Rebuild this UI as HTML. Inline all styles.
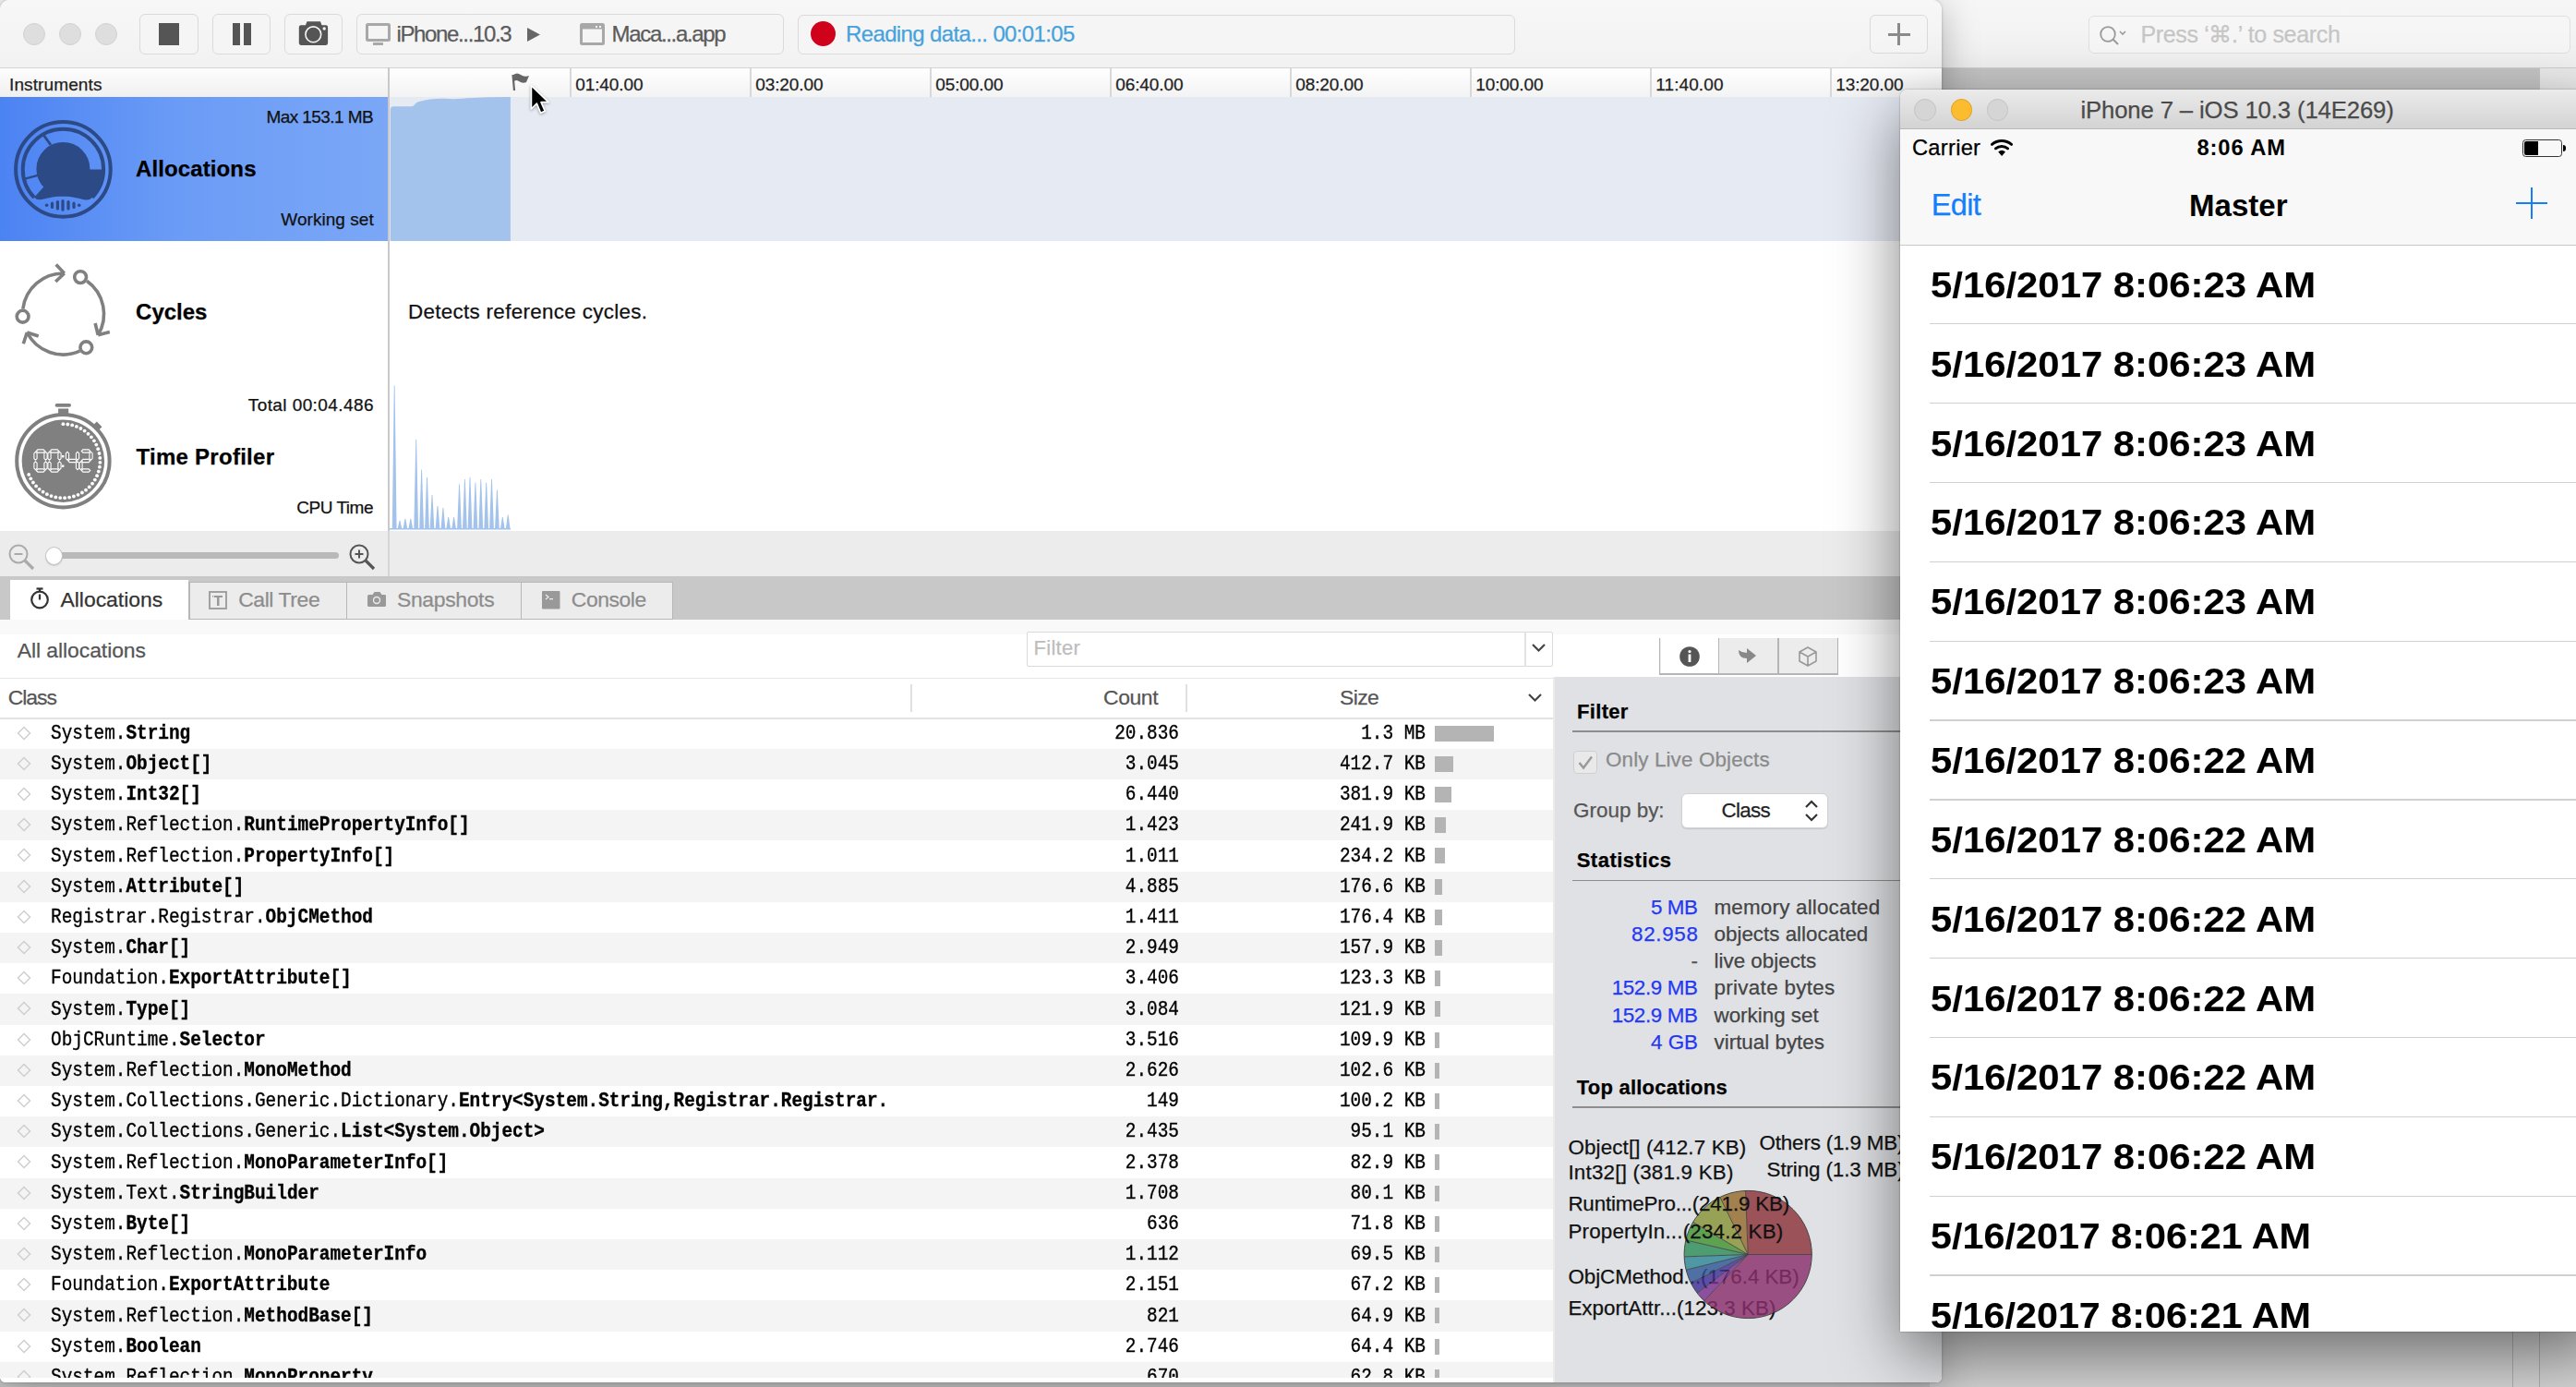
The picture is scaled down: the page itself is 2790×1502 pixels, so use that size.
<!DOCTYPE html><html><head><meta charset="utf-8"><style>
html,body{margin:0;padding:0;}
body{width:2790px;height:1502px;position:relative;overflow:hidden;background:#c6c6c6;font-family:"Liberation Sans",sans-serif;}
.t{position:absolute;white-space:pre;-webkit-text-stroke-width:0.25px;}
.r{position:absolute;box-sizing:border-box;}
svg{position:absolute;overflow:visible;}
</style></head><body>

<div class="r" style="left:2090px;top:0px;width:700px;height:74px;background:linear-gradient(#f6f6f6,#f1f1f1);border-bottom:1px solid #d0d0d0;"></div>
<div class="r" style="left:2262px;top:16.5px;width:522px;height:41.5px;background:#f6f6f6;border:1.5px solid #e0e0e0;border-radius:6px;"></div>
<div class="t" style="top:24.83px;font-size:25px;line-height:25px;color:#c6c6c6;font-weight:normal;font-family:'Liberation Sans', sans-serif;letter-spacing:-0.335px;left:2318.40px;">Press ‘⌘.’ to search</div>
<svg style="left:2272px;top:25px" width="36" height="28" viewBox="0 0 36 28"><circle cx="11" cy="12" r="7.8" fill="none" stroke="#9a9a9a" stroke-width="1.8"/><line x1="16.5" y1="17.5" x2="22" y2="23" stroke="#9a9a9a" stroke-width="2"/><path d="M24 9 L27 12 L30 9" fill="none" stroke="#9a9a9a" stroke-width="1.6"/></svg>
<div class="r" style="left:2090px;top:74px;width:661px;height:25px;background:#c6c6c6;"></div>
<div class="r" style="left:2751px;top:74px;width:39px;height:25px;background:#ececec;"></div>
<div class="r" style="left:2090px;top:99px;width:700px;height:1403px;background:#d6d6d6;"></div>
<div class="r" style="left:2721px;top:1441px;width:1px;height:61px;background:#b0b0b0;"></div>
<div class="r" style="left:2750px;top:1441px;width:1px;height:61px;background:#b0b0b0;"></div>
<div class="r" style="left:0px;top:0px;width:24px;height:24px;background:#f2f2f2;"></div>
<div class="r" style="left:0;top:0;width:2103px;height:1497px;border-radius:10px 10px 6px 6px;overflow:hidden;background:#fff;box-shadow:0 0 3px rgba(0,0,0,0.25),0 8px 40px rgba(0,0,0,0.28);">
<div class="r" style="left:0px;top:0px;width:2103px;height:74px;background:linear-gradient(#f7f7f7,#f2f2f2);border-bottom:1.5px solid #d3d3d3;"></div>
<div class="r" style="left:25px;top:24.6px;width:24px;height:24.0px;background:#dedede;border:1px solid #d2d2d2;border-radius:50%;"></div>
<div class="r" style="left:64px;top:24.6px;width:24px;height:24.0px;background:#dedede;border:1px solid #d2d2d2;border-radius:50%;"></div>
<div class="r" style="left:103px;top:24.6px;width:24px;height:24.0px;background:#dedede;border:1px solid #d2d2d2;border-radius:50%;"></div>
<div class="r" style="left:151px;top:15px;width:64px;height:44px;background:#f5f5f5;border:1.5px solid #dadada;border-radius:6px;"></div>
<div class="r" style="left:230px;top:15px;width:63px;height:44px;background:#f5f5f5;border:1.5px solid #dadada;border-radius:6px;"></div>
<div class="r" style="left:308px;top:15px;width:63px;height:44px;background:#f5f5f5;border:1.5px solid #dadada;border-radius:6px;"></div>
<div class="r" style="left:172px;top:25px;width:22px;height:24px;background:#555;"></div>
<div class="r" style="left:252px;top:25px;width:8px;height:24px;background:#555;"></div>
<div class="r" style="left:264px;top:25px;width:8px;height:24px;background:#555;"></div>
<svg style="left:0;top:0" width="400" height="74"><path d="M326 27.2 L331 27.2 L332.5 23.3 L347 23.3 L348.5 27.2 L353 27.2 Q355.1 27.2 355.1 29.5 L355.1 46.8 Q355.1 48.9 353 48.9 L326 48.9 Q323.8 48.9 323.8 46.8 L323.8 29.5 Q323.8 27.2 326 27.2 Z" fill="#555"/><circle cx="339.3" cy="37.3" r="8.4" fill="none" stroke="#f5f5f5" stroke-width="1.6"/><circle cx="351.2" cy="31" r="1.7" fill="#f5f5f5"/></svg>
<div class="r" style="left:386px;top:15px;width:463px;height:44px;background:#f5f5f5;border:1.5px solid #dadada;border-radius:6px;"></div>
<svg style="left:396px;top:25px" width="28" height="26" viewBox="0 0 28 26"><rect x="1.5" y="1.5" width="24" height="17" fill="none" stroke="#a8a8a8" stroke-width="3" rx="1"/><rect x="8" y="21" width="11" height="3" fill="#a8a8a8"/></svg>
<div class="t" style="top:24.98px;font-size:24px;line-height:24px;color:#5b5b5b;font-weight:normal;font-family:'Liberation Sans', sans-serif;letter-spacing:-1.363px;left:429.50px;">iPhone...10.3</div>
<svg style="left:570px;top:30px" width="16" height="16" viewBox="0 0 16 16"><path d="M1 0 L15 7.5 L1 15z" fill="#666"/></svg>
<svg style="left:628px;top:25px" width="28" height="24" viewBox="0 0 28 24"><rect x="1.5" y="1.5" width="24" height="21" fill="none" stroke="#a8a8a8" stroke-width="3" rx="1"/><rect x="1.5" y="1.5" width="24" height="5" fill="#a8a8a8"/><rect x="17" y="3" width="2" height="2" fill="#f5f5f5"/><rect x="21" y="3" width="2" height="2" fill="#f5f5f5"/></svg>
<div class="t" style="top:24.98px;font-size:24px;line-height:24px;color:#5b5b5b;font-weight:normal;font-family:'Liberation Sans', sans-serif;letter-spacing:-1.333px;left:662.60px;">Maca...a.app</div>
<div class="r" style="left:864px;top:15.7px;width:777px;height:43.0px;background:#f5f5f5;border:1.5px solid #dadada;border-radius:6px;"></div>
<div class="r" style="left:878px;top:23px;width:27px;height:27px;background:#d0021b;border-radius:50%;"></div>
<div class="t" style="top:24.88px;font-size:24px;line-height:24px;color:#45a2dd;font-weight:normal;font-family:'Liberation Sans', sans-serif;letter-spacing:-0.629px;left:916.00px;">Reading data... 00:01:05</div>
<div class="r" style="left:2025px;top:15.7px;width:63px;height:42.7px;background:#f5f5f5;border:1.5px solid #dadada;border-radius:6px;"></div>
<div class="r" style="left:2044.5px;top:36px;width:24.0px;height:2.5px;background:#8a8a8a;"></div>
<div class="r" style="left:2055.3px;top:25.2px;width:2.5px;height:24.000000000000004px;background:#8a8a8a;"></div>
<div class="r" style="left:0px;top:74px;width:420px;height:31px;background:linear-gradient(#fdfdfd,#f0f0f0);"></div>
<div class="t" style="top:82.41px;font-size:19px;line-height:19px;color:#222;font-weight:normal;font-family:'Liberation Sans', sans-serif;letter-spacing:0.113px;left:10.00px;">Instruments</div>
<div class="r" style="left:421px;top:74px;width:1682px;height:31px;background:linear-gradient(#ffffff,#f3f3f3);"></div>
<div class="r" style="left:617px;top:74px;width:1.5px;height:31px;background:#d8d8d8;"></div>
<div class="t" style="top:81.71px;font-size:19px;line-height:19px;color:#222;font-weight:normal;font-family:'Liberation Sans', sans-serif;letter-spacing:-0.096px;left:623.20px;">01:40.00</div>
<div class="r" style="left:812px;top:74px;width:1.5px;height:31px;background:#d8d8d8;"></div>
<div class="t" style="top:81.71px;font-size:19px;line-height:19px;color:#222;font-weight:normal;font-family:'Liberation Sans', sans-serif;letter-spacing:-0.096px;left:818.20px;">03:20.00</div>
<div class="r" style="left:1007px;top:74px;width:1.5px;height:31px;background:#d8d8d8;"></div>
<div class="t" style="top:81.71px;font-size:19px;line-height:19px;color:#222;font-weight:normal;font-family:'Liberation Sans', sans-serif;letter-spacing:-0.096px;left:1013.20px;">05:00.00</div>
<div class="r" style="left:1202px;top:74px;width:1.5px;height:31px;background:#d8d8d8;"></div>
<div class="t" style="top:81.71px;font-size:19px;line-height:19px;color:#222;font-weight:normal;font-family:'Liberation Sans', sans-serif;letter-spacing:-0.096px;left:1208.20px;">06:40.00</div>
<div class="r" style="left:1397px;top:74px;width:1.5px;height:31px;background:#d8d8d8;"></div>
<div class="t" style="top:81.71px;font-size:19px;line-height:19px;color:#222;font-weight:normal;font-family:'Liberation Sans', sans-serif;letter-spacing:-0.096px;left:1403.20px;">08:20.00</div>
<div class="r" style="left:1592px;top:74px;width:1.5px;height:31px;background:#d8d8d8;"></div>
<div class="t" style="top:81.71px;font-size:19px;line-height:19px;color:#222;font-weight:normal;font-family:'Liberation Sans', sans-serif;letter-spacing:-0.096px;left:1598.20px;">10:00.00</div>
<div class="r" style="left:1787px;top:74px;width:1.5px;height:31px;background:#d8d8d8;"></div>
<div class="t" style="top:81.71px;font-size:19px;line-height:19px;color:#222;font-weight:normal;font-family:'Liberation Sans', sans-serif;letter-spacing:0.107px;left:1793.20px;">11:40.00</div>
<div class="r" style="left:1982px;top:74px;width:1.5px;height:31px;background:#d8d8d8;"></div>
<div class="t" style="top:81.71px;font-size:19px;line-height:19px;color:#222;font-weight:normal;font-family:'Liberation Sans', sans-serif;letter-spacing:-0.096px;left:1988.20px;">13:20.00</div>
<div class="r" style="left:420px;top:73px;width:1.5px;height:551px;background:#c9c9c9;"></div>
<div class="r" style="left:0px;top:105px;width:420px;height:156px;background:linear-gradient(90deg,#4c83f3 0%,#6a9bf6 45%,#7ba7f6 100%);"></div>
<div class="t" style="top:117.41px;font-size:19px;line-height:19px;color:#111;font-weight:normal;font-family:'Liberation Sans', sans-serif;letter-spacing:-0.564px;left:-1095.86px;width:1500px;text-align:right;">Max 153.1 MB</div>
<div class="t" style="top:228.41px;font-size:19px;line-height:19px;color:#111;font-weight:normal;font-family:'Liberation Sans', sans-serif;letter-spacing:0.044px;left:-1095.26px;width:1500px;text-align:right;">Working set</div>
<div class="t" style="top:171.18px;font-size:24px;line-height:24px;color:#000;font-weight:bold;font-family:'Liberation Sans', sans-serif;letter-spacing:0.104px;left:147.10px;">Allocations</div>
<div class="r" style="left:421.5px;top:105px;width:1681.5px;height:156px;background:#e6eaf3;"></div>
<svg style="left:421px;top:105px" width="140" height="156" viewBox="0 0 140 156"><path d="M1.8 156 L1.8 14 Q2 10.2 5 10.2 L25.5 10.2 Q27.5 10 29 7 Q31 5 34 4.8 Q45 1.5 60 1.8 Q70 2.5 80 1.8 Q100 0 131.9 0 L131.9 156 Z" fill="#a3c3ec"/></svg>
<div class="t" style="top:326.18px;font-size:24px;line-height:24px;color:#000;font-weight:bold;font-family:'Liberation Sans', sans-serif;letter-spacing:-0.021px;left:147.10px;">Cycles</div>
<div class="t" style="top:326.53px;font-size:22.4px;line-height:22.4px;color:#111;font-weight:normal;font-family:'Liberation Sans', sans-serif;letter-spacing:0.322px;left:441.90px;">Detects reference cycles.</div>
<div class="t" style="top:429.41px;font-size:19px;line-height:19px;color:#111;font-weight:normal;font-family:'Liberation Sans', sans-serif;letter-spacing:0.415px;left:-1095.09px;width:1500px;text-align:right;">Total 00:04.486</div>
<div class="t" style="top:540.41px;font-size:19px;line-height:19px;color:#111;font-weight:normal;font-family:'Liberation Sans', sans-serif;letter-spacing:-0.476px;left:-1095.98px;width:1500px;text-align:right;">CPU Time</div>
<div class="t" style="top:483.18px;font-size:24px;line-height:24px;color:#000;font-weight:bold;font-family:'Liberation Sans', sans-serif;letter-spacing:0.268px;left:147.50px;">Time Profiler</div>
<svg style="left:0;top:0" width="2103" height="1497"><path d="M424.8 573 L426.8 417.4 L427.6 417.4 L429.6 573z M430.6 573 L432.6 563.7 L433.4 563.7 L435.4 573z M436.5 573 L438.5 561.8 L439.3 561.8 L441.3 573z M442.4 573 L444.4 561.8 L445.2 561.8 L447.2 573z M448.3 573 L450.3 476.0 L451.1 476.0 L453.1 573z M454.2 573 L456.2 508.6 L457.0 508.6 L459.0 573z M460.1 573 L462.1 516.7 L462.9 516.7 L464.9 573z M465.6 573 L467.6 536.0 L468.4 536.0 L470.4 573z M471.6 573 L473.6 547.8 L474.4 547.8 L476.4 573z M477.5 573 L479.5 549.8 L480.3 549.8 L482.3 573z M483.3 573 L485.3 560.0 L486.1 560.0 L488.1 573z M489.2 573 L491.2 560.0 L492.0 560.0 L494.0 573z M495.1 573 L497.1 524.5 L497.9 524.5 L499.9 573z M501.0 573 L503.0 518.9 L503.8 518.9 L505.8 573z M506.6 573 L508.6 516.7 L509.4 516.7 L511.4 573z M512.5 573 L514.5 522.5 L515.3 522.5 L517.3 573z M518.4 573 L520.4 518.9 L521.2 518.9 L523.2 573z M524.3 573 L526.3 522.5 L527.1 522.5 L529.1 573z M530.1 573 L532.1 518.9 L532.9 518.9 L534.9 573z M536.0 573 L538.0 530.6 L538.8 530.6 L540.8 573z M541.9 573 L543.9 560.0 L544.7 560.0 L546.7 573z M547.8 573 L549.8 557.6 L550.6 557.6 L552.6 573z " fill="#a3c3ec"/><rect x="422" y="572" width="131" height="1.5" fill="#a3c3ec"/></svg>
<div class="r" style="left:0px;top:575px;width:2103px;height:49px;background:#ececec;"></div>
<div class="r" style="left:420px;top:575px;width:1.5px;height:49px;background:#d6d6d6;"></div>
<svg style="left:8px;top:588px" width="32" height="30" viewBox="0 0 32 30"><circle cx="12" cy="12" r="9.5" fill="none" stroke="#aaa" stroke-width="2"/><line x1="7.5" y1="12" x2="16.5" y2="12" stroke="#aaa" stroke-width="2"/><line x1="19" y1="19" x2="28" y2="28" stroke="#aaa" stroke-width="3.2"/></svg>
<div class="r" style="left:50px;top:598px;width:317px;height:7px;background:#b9b9b9;border-radius:4px;"></div>
<div class="r" style="left:48.5px;top:592px;width:19.0px;height:20px;background:#fff;border:1px solid #c6c6c6;border-radius:50%;box-shadow:0 1px 1px rgba(0,0,0,0.15);"></div>
<svg style="left:376px;top:588px" width="32" height="30" viewBox="0 0 32 30"><circle cx="13" cy="12" r="9.5" fill="none" stroke="#555" stroke-width="2"/><line x1="8.5" y1="12" x2="17.5" y2="12" stroke="#555" stroke-width="2"/><line x1="13" y1="7.5" x2="13" y2="16.5" stroke="#555" stroke-width="2"/><line x1="20" y1="19" x2="29" y2="28" stroke="#555" stroke-width="3.2"/></svg>
<div class="r" style="left:0px;top:624px;width:2103px;height:47px;background:#c8c8c8;"></div>
<div class="r" style="left:11px;top:628.3px;width:193px;height:42.700000000000045px;background:#fff;"></div>
<div class="r" style="left:204px;top:630px;width:171.5px;height:41px;background:#ececec;border:1.5px solid #b7b7b7;border-left:none;"></div>
<div class="r" style="left:375.5px;top:630px;width:189.5px;height:41px;background:#ececec;border:1.5px solid #b7b7b7;border-left:none;"></div>
<div class="r" style="left:565px;top:630px;width:164px;height:41px;background:#ececec;border:1.5px solid #b7b7b7;border-left:none;"></div>
<div class="r" style="left:204px;top:630px;width:1.5px;height:41px;background:#b7b7b7;"></div>
<div class="t" style="top:638.31px;font-size:22.9px;line-height:22.9px;color:#333;font-weight:normal;font-family:'Liberation Sans', sans-serif;letter-spacing:-0.000px;left:65.50px;">Allocations</div>
<div class="t" style="top:638.31px;font-size:22.9px;line-height:22.9px;color:#8c8c8c;font-weight:normal;font-family:'Liberation Sans', sans-serif;letter-spacing:-0.389px;left:258.20px;">Call Tree</div>
<div class="t" style="top:638.31px;font-size:22.9px;line-height:22.9px;color:#8c8c8c;font-weight:normal;font-family:'Liberation Sans', sans-serif;letter-spacing:-0.323px;left:430.00px;">Snapshots</div>
<div class="t" style="top:638.31px;font-size:22.9px;line-height:22.9px;color:#8c8c8c;font-weight:normal;font-family:'Liberation Sans', sans-serif;letter-spacing:-0.433px;left:618.80px;">Console</div>
<svg style="left:32px;top:634px" width="24" height="28" viewBox="0 0 24 28"><circle cx="11" cy="15.5" r="8.8" fill="none" stroke="#333" stroke-width="2.2"/><line x1="11" y1="9.5" x2="11" y2="15.5" stroke="#333" stroke-width="2.2"/><line x1="7.5" y1="3.5" x2="14.5" y2="3.5" stroke="#333" stroke-width="2.2"/><line x1="11" y1="3.5" x2="11" y2="6.5" stroke="#333" stroke-width="2.2"/></svg>
<svg style="left:226px;top:640px" width="20" height="20" viewBox="0 0 20 20"><rect x="1" y="1" width="18" height="18" fill="none" stroke="#999" stroke-width="1.8"/><rect x="6" y="5" width="9" height="2" fill="#999"/><rect x="9" y="5" width="2.5" height="11" fill="#999"/><rect x="4" y="5" width="1.2" height="1.5" fill="#999"/></svg>
<svg style="left:398px;top:640px" width="20" height="18" viewBox="0 0 20 18"><path d="M2 4 h3.5 l2-3 h6 l2 3 h3.5 a1.5 1.5 0 0 1 1 1.5 v10 a1.5 1.5 0 0 1-1.5 1.5 h-17 a1.5 1.5 0 0 1-1.5-1.5 v-10 a1.5 1.5 0 0 1 1.5-1.5z" fill="#999"/><circle cx="10" cy="10" r="4.2" fill="#ececec"/><circle cx="10" cy="10" r="2.8" fill="#999"/></svg>
<svg style="left:587px;top:640px" width="20" height="20" viewBox="0 0 20 20"><rect x="0" y="0" width="19.5" height="19.5" fill="#999" rx="1"/><path d="M4 4 L7 6.5 L4 9" fill="none" stroke="#ececec" stroke-width="1.3"/><rect x="8" y="8" width="4" height="1.3" fill="#ececec"/></svg>
<div class="r" style="left:0px;top:671px;width:2103px;height:826px;background:#fff;"></div>
<div class="r" style="left:0px;top:671px;width:1682px;height:16px;background:#f9f9f9;"></div>
<div class="t" style="top:693.11px;font-size:22.9px;line-height:22.9px;color:#555;font-weight:normal;font-family:'Liberation Sans', sans-serif;letter-spacing:-0.051px;left:18.75px;">All allocations</div>
<div class="r" style="left:1112px;top:684px;width:570px;height:38px;background:#fff;border:1.5px solid #d9d9d9;border-radius:2px;"></div>
<div class="r" style="left:1651px;top:684px;width:1.5px;height:38px;background:#e2e2e2;"></div>
<div class="t" style="top:691.47px;font-size:22px;line-height:22px;color:#bdbdbd;font-weight:normal;font-family:'Liberation Sans', sans-serif;letter-spacing:0.280px;left:1119.50px;">Filter</div>
<svg style="left:1658px;top:696px" width="18" height="12" viewBox="0 0 18 12"><path d="M2 2 L8.5 8.5 L15 2" fill="none" stroke="#444" stroke-width="2.2"/></svg>
<div class="r" style="left:0px;top:733.5px;width:1682px;height:1.5px;background:#e6e6e6;"></div>
<div class="t" style="top:743.61px;font-size:22.9px;line-height:22.9px;color:#555;font-weight:normal;font-family:'Liberation Sans', sans-serif;letter-spacing:-1.000px;left:8.75px;">Class</div>
<div class="r" style="left:986px;top:741px;width:1.5px;height:30px;background:#e0e0e0;"></div>
<div class="r" style="left:1284px;top:741px;width:1.5px;height:30px;background:#e0e0e0;"></div>
<div class="t" style="top:743.91px;font-size:22.9px;line-height:22.9px;color:#555;font-weight:normal;font-family:'Liberation Sans', sans-serif;letter-spacing:-0.396px;left:-245.90px;width:1500px;text-align:right;">Count</div>
<div class="t" style="top:743.91px;font-size:22.9px;line-height:22.9px;color:#555;font-weight:normal;font-family:'Liberation Sans', sans-serif;letter-spacing:-0.581px;left:1451.00px;">Size</div>
<svg style="left:1654px;top:750px" width="18" height="12" viewBox="0 0 18 12"><path d="M2 2 L8.5 8.5 L15 2" fill="none" stroke="#444" stroke-width="2.2"/></svg>
<div class="r" style="left:0px;top:777px;width:1682px;height:1.5px;background:#e3e3e3;"></div>
<div class="r" style="left:0;top:777.7px;width:1682px;height:714px;overflow:hidden;">
<svg style="left:18px;top:8.00px" width="16" height="16" viewBox="0 0 16 16"><path d="M8 1.5 L14.5 8 L8 14.5 L1.5 8z" fill="none" stroke="#cfcfcf" stroke-width="1.5"/></svg>
<div class="t" style="top:6.15px;font-size:21.6px;line-height:21.6px;color:#000;font-weight:normal;font-family:'Liberation Mono', monospace;transform:scaleX(0.8975);transform-origin:left center;left:55.00px;-webkit-text-stroke-width:0.35px;">System.<b>String</b></div>
<div class="t" style="top:6.15px;font-size:21.6px;line-height:21.6px;color:#000;font-weight:normal;font-family:'Liberation Mono', monospace;transform:scaleX(0.8975);transform-origin:right center;left:-223.00px;width:1500px;text-align:right;-webkit-text-stroke-width:0.35px;">20.836</div>
<div class="t" style="top:6.15px;font-size:21.6px;line-height:21.6px;color:#000;font-weight:normal;font-family:'Liberation Mono', monospace;transform:scaleX(0.8975);transform-origin:right center;left:43.50px;width:1500px;text-align:right;-webkit-text-stroke-width:0.35px;">1.3 MB</div>
<div class="r" style="left:1554px;top:8.0px;width:64.0px;height:17.0px;background:#b4b4b4;"></div>
<div class="r" style="left:0px;top:33.2px;width:1682px;height:33.2px;background:#f4f4f4;"></div>
<svg style="left:18px;top:41.20px" width="16" height="16" viewBox="0 0 16 16"><path d="M8 1.5 L14.5 8 L8 14.5 L1.5 8z" fill="none" stroke="#cfcfcf" stroke-width="1.5"/></svg>
<div class="t" style="top:39.35px;font-size:21.6px;line-height:21.6px;color:#000;font-weight:normal;font-family:'Liberation Mono', monospace;transform:scaleX(0.8975);transform-origin:left center;left:55.00px;-webkit-text-stroke-width:0.35px;">System.<b>Object[]</b></div>
<div class="t" style="top:39.35px;font-size:21.6px;line-height:21.6px;color:#000;font-weight:normal;font-family:'Liberation Mono', monospace;transform:scaleX(0.8975);transform-origin:right center;left:-223.00px;width:1500px;text-align:right;-webkit-text-stroke-width:0.35px;">3.045</div>
<div class="t" style="top:39.35px;font-size:21.6px;line-height:21.6px;color:#000;font-weight:normal;font-family:'Liberation Mono', monospace;transform:scaleX(0.8975);transform-origin:right center;left:43.50px;width:1500px;text-align:right;-webkit-text-stroke-width:0.35px;">412.7 KB</div>
<div class="r" style="left:1554px;top:41.2px;width:19.839999999999918px;height:17.0px;background:#b4b4b4;"></div>
<svg style="left:18px;top:74.40px" width="16" height="16" viewBox="0 0 16 16"><path d="M8 1.5 L14.5 8 L8 14.5 L1.5 8z" fill="none" stroke="#cfcfcf" stroke-width="1.5"/></svg>
<div class="t" style="top:72.55px;font-size:21.6px;line-height:21.6px;color:#000;font-weight:normal;font-family:'Liberation Mono', monospace;transform:scaleX(0.8975);transform-origin:left center;left:55.00px;-webkit-text-stroke-width:0.35px;">System.<b>Int32[]</b></div>
<div class="t" style="top:72.55px;font-size:21.6px;line-height:21.6px;color:#000;font-weight:normal;font-family:'Liberation Mono', monospace;transform:scaleX(0.8975);transform-origin:right center;left:-223.00px;width:1500px;text-align:right;-webkit-text-stroke-width:0.35px;">6.440</div>
<div class="t" style="top:72.55px;font-size:21.6px;line-height:21.6px;color:#000;font-weight:normal;font-family:'Liberation Mono', monospace;transform:scaleX(0.8975);transform-origin:right center;left:43.50px;width:1500px;text-align:right;-webkit-text-stroke-width:0.35px;">381.9 KB</div>
<div class="r" style="left:1554px;top:74.4px;width:18.3599999999999px;height:17.0px;background:#b4b4b4;"></div>
<div class="r" style="left:0px;top:99.6px;width:1682px;height:33.20000000000002px;background:#f4f4f4;"></div>
<svg style="left:18px;top:107.60px" width="16" height="16" viewBox="0 0 16 16"><path d="M8 1.5 L14.5 8 L8 14.5 L1.5 8z" fill="none" stroke="#cfcfcf" stroke-width="1.5"/></svg>
<div class="t" style="top:105.75px;font-size:21.6px;line-height:21.6px;color:#000;font-weight:normal;font-family:'Liberation Mono', monospace;transform:scaleX(0.8975);transform-origin:left center;left:55.00px;-webkit-text-stroke-width:0.35px;">System.Reflection.<b>RuntimePropertyInfo[]</b></div>
<div class="t" style="top:105.75px;font-size:21.6px;line-height:21.6px;color:#000;font-weight:normal;font-family:'Liberation Mono', monospace;transform:scaleX(0.8975);transform-origin:right center;left:-223.00px;width:1500px;text-align:right;-webkit-text-stroke-width:0.35px;">1.423</div>
<div class="t" style="top:105.75px;font-size:21.6px;line-height:21.6px;color:#000;font-weight:normal;font-family:'Liberation Mono', monospace;transform:scaleX(0.8975);transform-origin:right center;left:43.50px;width:1500px;text-align:right;-webkit-text-stroke-width:0.35px;">241.9 KB</div>
<div class="r" style="left:1554px;top:107.6px;width:11.63000000000011px;height:17.0px;background:#b4b4b4;"></div>
<svg style="left:18px;top:140.80px" width="16" height="16" viewBox="0 0 16 16"><path d="M8 1.5 L14.5 8 L8 14.5 L1.5 8z" fill="none" stroke="#cfcfcf" stroke-width="1.5"/></svg>
<div class="t" style="top:138.95px;font-size:21.6px;line-height:21.6px;color:#000;font-weight:normal;font-family:'Liberation Mono', monospace;transform:scaleX(0.8975);transform-origin:left center;left:55.00px;-webkit-text-stroke-width:0.35px;">System.Reflection.<b>PropertyInfo[]</b></div>
<div class="t" style="top:138.95px;font-size:21.6px;line-height:21.6px;color:#000;font-weight:normal;font-family:'Liberation Mono', monospace;transform:scaleX(0.8975);transform-origin:right center;left:-223.00px;width:1500px;text-align:right;-webkit-text-stroke-width:0.35px;">1.011</div>
<div class="t" style="top:138.95px;font-size:21.6px;line-height:21.6px;color:#000;font-weight:normal;font-family:'Liberation Mono', monospace;transform:scaleX(0.8975);transform-origin:right center;left:43.50px;width:1500px;text-align:right;-webkit-text-stroke-width:0.35px;">234.2 KB</div>
<div class="r" style="left:1554px;top:140.8px;width:11.259999999999991px;height:17.0px;background:#b4b4b4;"></div>
<div class="r" style="left:0px;top:166.0px;width:1682px;height:33.19999999999999px;background:#f4f4f4;"></div>
<svg style="left:18px;top:174.00px" width="16" height="16" viewBox="0 0 16 16"><path d="M8 1.5 L14.5 8 L8 14.5 L1.5 8z" fill="none" stroke="#cfcfcf" stroke-width="1.5"/></svg>
<div class="t" style="top:172.15px;font-size:21.6px;line-height:21.6px;color:#000;font-weight:normal;font-family:'Liberation Mono', monospace;transform:scaleX(0.8975);transform-origin:left center;left:55.00px;-webkit-text-stroke-width:0.35px;">System.<b>Attribute[]</b></div>
<div class="t" style="top:172.15px;font-size:21.6px;line-height:21.6px;color:#000;font-weight:normal;font-family:'Liberation Mono', monospace;transform:scaleX(0.8975);transform-origin:right center;left:-223.00px;width:1500px;text-align:right;-webkit-text-stroke-width:0.35px;">4.885</div>
<div class="t" style="top:172.15px;font-size:21.6px;line-height:21.6px;color:#000;font-weight:normal;font-family:'Liberation Mono', monospace;transform:scaleX(0.8975);transform-origin:right center;left:43.50px;width:1500px;text-align:right;-webkit-text-stroke-width:0.35px;">176.6 KB</div>
<div class="r" style="left:1554px;top:174.0px;width:8.490000000000009px;height:17.0px;background:#b4b4b4;"></div>
<svg style="left:18px;top:207.20px" width="16" height="16" viewBox="0 0 16 16"><path d="M8 1.5 L14.5 8 L8 14.5 L1.5 8z" fill="none" stroke="#cfcfcf" stroke-width="1.5"/></svg>
<div class="t" style="top:205.35px;font-size:21.6px;line-height:21.6px;color:#000;font-weight:normal;font-family:'Liberation Mono', monospace;transform:scaleX(0.8975);transform-origin:left center;left:55.00px;-webkit-text-stroke-width:0.35px;">Registrar.Registrar.<b>ObjCMethod</b></div>
<div class="t" style="top:205.35px;font-size:21.6px;line-height:21.6px;color:#000;font-weight:normal;font-family:'Liberation Mono', monospace;transform:scaleX(0.8975);transform-origin:right center;left:-223.00px;width:1500px;text-align:right;-webkit-text-stroke-width:0.35px;">1.411</div>
<div class="t" style="top:205.35px;font-size:21.6px;line-height:21.6px;color:#000;font-weight:normal;font-family:'Liberation Mono', monospace;transform:scaleX(0.8975);transform-origin:right center;left:43.50px;width:1500px;text-align:right;-webkit-text-stroke-width:0.35px;">176.4 KB</div>
<div class="r" style="left:1554px;top:207.2px;width:8.480000000000018px;height:17.0px;background:#b4b4b4;"></div>
<div class="r" style="left:0px;top:232.4px;width:1682px;height:33.20000000000002px;background:#f4f4f4;"></div>
<svg style="left:18px;top:240.40px" width="16" height="16" viewBox="0 0 16 16"><path d="M8 1.5 L14.5 8 L8 14.5 L1.5 8z" fill="none" stroke="#cfcfcf" stroke-width="1.5"/></svg>
<div class="t" style="top:238.55px;font-size:21.6px;line-height:21.6px;color:#000;font-weight:normal;font-family:'Liberation Mono', monospace;transform:scaleX(0.8975);transform-origin:left center;left:55.00px;-webkit-text-stroke-width:0.35px;">System.<b>Char[]</b></div>
<div class="t" style="top:238.55px;font-size:21.6px;line-height:21.6px;color:#000;font-weight:normal;font-family:'Liberation Mono', monospace;transform:scaleX(0.8975);transform-origin:right center;left:-223.00px;width:1500px;text-align:right;-webkit-text-stroke-width:0.35px;">2.949</div>
<div class="t" style="top:238.55px;font-size:21.6px;line-height:21.6px;color:#000;font-weight:normal;font-family:'Liberation Mono', monospace;transform:scaleX(0.8975);transform-origin:right center;left:43.50px;width:1500px;text-align:right;-webkit-text-stroke-width:0.35px;">157.9 KB</div>
<div class="r" style="left:1554px;top:240.4px;width:7.589999999999918px;height:16.99999999999997px;background:#b4b4b4;"></div>
<svg style="left:18px;top:273.60px" width="16" height="16" viewBox="0 0 16 16"><path d="M8 1.5 L14.5 8 L8 14.5 L1.5 8z" fill="none" stroke="#cfcfcf" stroke-width="1.5"/></svg>
<div class="t" style="top:271.75px;font-size:21.6px;line-height:21.6px;color:#000;font-weight:normal;font-family:'Liberation Mono', monospace;transform:scaleX(0.8975);transform-origin:left center;left:55.00px;-webkit-text-stroke-width:0.35px;">Foundation.<b>ExportAttribute[]</b></div>
<div class="t" style="top:271.75px;font-size:21.6px;line-height:21.6px;color:#000;font-weight:normal;font-family:'Liberation Mono', monospace;transform:scaleX(0.8975);transform-origin:right center;left:-223.00px;width:1500px;text-align:right;-webkit-text-stroke-width:0.35px;">3.406</div>
<div class="t" style="top:271.75px;font-size:21.6px;line-height:21.6px;color:#000;font-weight:normal;font-family:'Liberation Mono', monospace;transform:scaleX(0.8975);transform-origin:right center;left:43.50px;width:1500px;text-align:right;-webkit-text-stroke-width:0.35px;">123.3 KB</div>
<div class="r" style="left:1554px;top:273.6px;width:5.930000000000064px;height:17.0px;background:#b4b4b4;"></div>
<div class="r" style="left:0px;top:298.8px;width:1682px;height:33.19999999999999px;background:#f4f4f4;"></div>
<svg style="left:18px;top:306.80px" width="16" height="16" viewBox="0 0 16 16"><path d="M8 1.5 L14.5 8 L8 14.5 L1.5 8z" fill="none" stroke="#cfcfcf" stroke-width="1.5"/></svg>
<div class="t" style="top:304.95px;font-size:21.6px;line-height:21.6px;color:#000;font-weight:normal;font-family:'Liberation Mono', monospace;transform:scaleX(0.8975);transform-origin:left center;left:55.00px;-webkit-text-stroke-width:0.35px;">System.<b>Type[]</b></div>
<div class="t" style="top:304.95px;font-size:21.6px;line-height:21.6px;color:#000;font-weight:normal;font-family:'Liberation Mono', monospace;transform:scaleX(0.8975);transform-origin:right center;left:-223.00px;width:1500px;text-align:right;-webkit-text-stroke-width:0.35px;">3.084</div>
<div class="t" style="top:304.95px;font-size:21.6px;line-height:21.6px;color:#000;font-weight:normal;font-family:'Liberation Mono', monospace;transform:scaleX(0.8975);transform-origin:right center;left:43.50px;width:1500px;text-align:right;-webkit-text-stroke-width:0.35px;">121.9 KB</div>
<div class="r" style="left:1554px;top:306.8px;width:5.8599999999999px;height:17.0px;background:#b4b4b4;"></div>
<svg style="left:18px;top:340.00px" width="16" height="16" viewBox="0 0 16 16"><path d="M8 1.5 L14.5 8 L8 14.5 L1.5 8z" fill="none" stroke="#cfcfcf" stroke-width="1.5"/></svg>
<div class="t" style="top:338.15px;font-size:21.6px;line-height:21.6px;color:#000;font-weight:normal;font-family:'Liberation Mono', monospace;transform:scaleX(0.8975);transform-origin:left center;left:55.00px;-webkit-text-stroke-width:0.35px;">ObjCRuntime.<b>Selector</b></div>
<div class="t" style="top:338.15px;font-size:21.6px;line-height:21.6px;color:#000;font-weight:normal;font-family:'Liberation Mono', monospace;transform:scaleX(0.8975);transform-origin:right center;left:-223.00px;width:1500px;text-align:right;-webkit-text-stroke-width:0.35px;">3.516</div>
<div class="t" style="top:338.15px;font-size:21.6px;line-height:21.6px;color:#000;font-weight:normal;font-family:'Liberation Mono', monospace;transform:scaleX(0.8975);transform-origin:right center;left:43.50px;width:1500px;text-align:right;-webkit-text-stroke-width:0.35px;">109.9 KB</div>
<div class="r" style="left:1554px;top:340.0px;width:5.279999999999973px;height:17.0px;background:#b4b4b4;"></div>
<div class="r" style="left:0px;top:365.2px;width:1682px;height:33.19999999999999px;background:#f4f4f4;"></div>
<svg style="left:18px;top:373.20px" width="16" height="16" viewBox="0 0 16 16"><path d="M8 1.5 L14.5 8 L8 14.5 L1.5 8z" fill="none" stroke="#cfcfcf" stroke-width="1.5"/></svg>
<div class="t" style="top:371.35px;font-size:21.6px;line-height:21.6px;color:#000;font-weight:normal;font-family:'Liberation Mono', monospace;transform:scaleX(0.8975);transform-origin:left center;left:55.00px;-webkit-text-stroke-width:0.35px;">System.Reflection.<b>MonoMethod</b></div>
<div class="t" style="top:371.35px;font-size:21.6px;line-height:21.6px;color:#000;font-weight:normal;font-family:'Liberation Mono', monospace;transform:scaleX(0.8975);transform-origin:right center;left:-223.00px;width:1500px;text-align:right;-webkit-text-stroke-width:0.35px;">2.626</div>
<div class="t" style="top:371.35px;font-size:21.6px;line-height:21.6px;color:#000;font-weight:normal;font-family:'Liberation Mono', monospace;transform:scaleX(0.8975);transform-origin:right center;left:43.50px;width:1500px;text-align:right;-webkit-text-stroke-width:0.35px;">102.6 KB</div>
<div class="r" style="left:1554px;top:373.2px;width:5px;height:17.0px;background:#b4b4b4;"></div>
<svg style="left:18px;top:406.40px" width="16" height="16" viewBox="0 0 16 16"><path d="M8 1.5 L14.5 8 L8 14.5 L1.5 8z" fill="none" stroke="#cfcfcf" stroke-width="1.5"/></svg>
<div class="t" style="top:404.55px;font-size:21.6px;line-height:21.6px;color:#000;font-weight:normal;font-family:'Liberation Mono', monospace;transform:scaleX(0.8975);transform-origin:left center;left:55.00px;-webkit-text-stroke-width:0.35px;">System.Collections.Generic.Dictionary.<b>Entry&lt;System.String,Registrar.Registrar.</b></div>
<div class="t" style="top:404.55px;font-size:21.6px;line-height:21.6px;color:#000;font-weight:normal;font-family:'Liberation Mono', monospace;transform:scaleX(0.8975);transform-origin:right center;left:-223.00px;width:1500px;text-align:right;-webkit-text-stroke-width:0.35px;">149</div>
<div class="t" style="top:404.55px;font-size:21.6px;line-height:21.6px;color:#000;font-weight:normal;font-family:'Liberation Mono', monospace;transform:scaleX(0.8975);transform-origin:right center;left:43.50px;width:1500px;text-align:right;-webkit-text-stroke-width:0.35px;">100.2 KB</div>
<div class="r" style="left:1554px;top:406.4px;width:5px;height:17.0px;background:#b4b4b4;"></div>
<div class="r" style="left:0px;top:431.6px;width:1682px;height:33.19999999999999px;background:#f4f4f4;"></div>
<svg style="left:18px;top:439.60px" width="16" height="16" viewBox="0 0 16 16"><path d="M8 1.5 L14.5 8 L8 14.5 L1.5 8z" fill="none" stroke="#cfcfcf" stroke-width="1.5"/></svg>
<div class="t" style="top:437.75px;font-size:21.6px;line-height:21.6px;color:#000;font-weight:normal;font-family:'Liberation Mono', monospace;transform:scaleX(0.8975);transform-origin:left center;left:55.00px;-webkit-text-stroke-width:0.35px;">System.Collections.Generic.<b>List&lt;System.Object&gt;</b></div>
<div class="t" style="top:437.75px;font-size:21.6px;line-height:21.6px;color:#000;font-weight:normal;font-family:'Liberation Mono', monospace;transform:scaleX(0.8975);transform-origin:right center;left:-223.00px;width:1500px;text-align:right;-webkit-text-stroke-width:0.35px;">2.435</div>
<div class="t" style="top:437.75px;font-size:21.6px;line-height:21.6px;color:#000;font-weight:normal;font-family:'Liberation Mono', monospace;transform:scaleX(0.8975);transform-origin:right center;left:43.50px;width:1500px;text-align:right;-webkit-text-stroke-width:0.35px;">95.1 KB</div>
<div class="r" style="left:1554px;top:439.6px;width:5px;height:17.0px;background:#b4b4b4;"></div>
<svg style="left:18px;top:472.80px" width="16" height="16" viewBox="0 0 16 16"><path d="M8 1.5 L14.5 8 L8 14.5 L1.5 8z" fill="none" stroke="#cfcfcf" stroke-width="1.5"/></svg>
<div class="t" style="top:470.95px;font-size:21.6px;line-height:21.6px;color:#000;font-weight:normal;font-family:'Liberation Mono', monospace;transform:scaleX(0.8975);transform-origin:left center;left:55.00px;-webkit-text-stroke-width:0.35px;">System.Reflection.<b>MonoParameterInfo[]</b></div>
<div class="t" style="top:470.95px;font-size:21.6px;line-height:21.6px;color:#000;font-weight:normal;font-family:'Liberation Mono', monospace;transform:scaleX(0.8975);transform-origin:right center;left:-223.00px;width:1500px;text-align:right;-webkit-text-stroke-width:0.35px;">2.378</div>
<div class="t" style="top:470.95px;font-size:21.6px;line-height:21.6px;color:#000;font-weight:normal;font-family:'Liberation Mono', monospace;transform:scaleX(0.8975);transform-origin:right center;left:43.50px;width:1500px;text-align:right;-webkit-text-stroke-width:0.35px;">82.9 KB</div>
<div class="r" style="left:1554px;top:472.8px;width:5px;height:17.0px;background:#b4b4b4;"></div>
<div class="r" style="left:0px;top:498.0px;width:1682px;height:33.200000000000045px;background:#f4f4f4;"></div>
<svg style="left:18px;top:506.00px" width="16" height="16" viewBox="0 0 16 16"><path d="M8 1.5 L14.5 8 L8 14.5 L1.5 8z" fill="none" stroke="#cfcfcf" stroke-width="1.5"/></svg>
<div class="t" style="top:504.15px;font-size:21.6px;line-height:21.6px;color:#000;font-weight:normal;font-family:'Liberation Mono', monospace;transform:scaleX(0.8975);transform-origin:left center;left:55.00px;-webkit-text-stroke-width:0.35px;">System.Text.<b>StringBuilder</b></div>
<div class="t" style="top:504.15px;font-size:21.6px;line-height:21.6px;color:#000;font-weight:normal;font-family:'Liberation Mono', monospace;transform:scaleX(0.8975);transform-origin:right center;left:-223.00px;width:1500px;text-align:right;-webkit-text-stroke-width:0.35px;">1.708</div>
<div class="t" style="top:504.15px;font-size:21.6px;line-height:21.6px;color:#000;font-weight:normal;font-family:'Liberation Mono', monospace;transform:scaleX(0.8975);transform-origin:right center;left:43.50px;width:1500px;text-align:right;-webkit-text-stroke-width:0.35px;">80.1 KB</div>
<div class="r" style="left:1554px;top:506.0px;width:5px;height:17.0px;background:#b4b4b4;"></div>
<svg style="left:18px;top:539.20px" width="16" height="16" viewBox="0 0 16 16"><path d="M8 1.5 L14.5 8 L8 14.5 L1.5 8z" fill="none" stroke="#cfcfcf" stroke-width="1.5"/></svg>
<div class="t" style="top:537.35px;font-size:21.6px;line-height:21.6px;color:#000;font-weight:normal;font-family:'Liberation Mono', monospace;transform:scaleX(0.8975);transform-origin:left center;left:55.00px;-webkit-text-stroke-width:0.35px;">System.<b>Byte[]</b></div>
<div class="t" style="top:537.35px;font-size:21.6px;line-height:21.6px;color:#000;font-weight:normal;font-family:'Liberation Mono', monospace;transform:scaleX(0.8975);transform-origin:right center;left:-223.00px;width:1500px;text-align:right;-webkit-text-stroke-width:0.35px;">636</div>
<div class="t" style="top:537.35px;font-size:21.6px;line-height:21.6px;color:#000;font-weight:normal;font-family:'Liberation Mono', monospace;transform:scaleX(0.8975);transform-origin:right center;left:43.50px;width:1500px;text-align:right;-webkit-text-stroke-width:0.35px;">71.8 KB</div>
<div class="r" style="left:1554px;top:539.2px;width:5px;height:17.0px;background:#b4b4b4;"></div>
<div class="r" style="left:0px;top:564.4px;width:1682px;height:33.200000000000045px;background:#f4f4f4;"></div>
<svg style="left:18px;top:572.40px" width="16" height="16" viewBox="0 0 16 16"><path d="M8 1.5 L14.5 8 L8 14.5 L1.5 8z" fill="none" stroke="#cfcfcf" stroke-width="1.5"/></svg>
<div class="t" style="top:570.55px;font-size:21.6px;line-height:21.6px;color:#000;font-weight:normal;font-family:'Liberation Mono', monospace;transform:scaleX(0.8975);transform-origin:left center;left:55.00px;-webkit-text-stroke-width:0.35px;">System.Reflection.<b>MonoParameterInfo</b></div>
<div class="t" style="top:570.55px;font-size:21.6px;line-height:21.6px;color:#000;font-weight:normal;font-family:'Liberation Mono', monospace;transform:scaleX(0.8975);transform-origin:right center;left:-223.00px;width:1500px;text-align:right;-webkit-text-stroke-width:0.35px;">1.112</div>
<div class="t" style="top:570.55px;font-size:21.6px;line-height:21.6px;color:#000;font-weight:normal;font-family:'Liberation Mono', monospace;transform:scaleX(0.8975);transform-origin:right center;left:43.50px;width:1500px;text-align:right;-webkit-text-stroke-width:0.35px;">69.5 KB</div>
<div class="r" style="left:1554px;top:572.4px;width:5px;height:17.0px;background:#b4b4b4;"></div>
<svg style="left:18px;top:605.60px" width="16" height="16" viewBox="0 0 16 16"><path d="M8 1.5 L14.5 8 L8 14.5 L1.5 8z" fill="none" stroke="#cfcfcf" stroke-width="1.5"/></svg>
<div class="t" style="top:603.75px;font-size:21.6px;line-height:21.6px;color:#000;font-weight:normal;font-family:'Liberation Mono', monospace;transform:scaleX(0.8975);transform-origin:left center;left:55.00px;-webkit-text-stroke-width:0.35px;">Foundation.<b>ExportAttribute</b></div>
<div class="t" style="top:603.75px;font-size:21.6px;line-height:21.6px;color:#000;font-weight:normal;font-family:'Liberation Mono', monospace;transform:scaleX(0.8975);transform-origin:right center;left:-223.00px;width:1500px;text-align:right;-webkit-text-stroke-width:0.35px;">2.151</div>
<div class="t" style="top:603.75px;font-size:21.6px;line-height:21.6px;color:#000;font-weight:normal;font-family:'Liberation Mono', monospace;transform:scaleX(0.8975);transform-origin:right center;left:43.50px;width:1500px;text-align:right;-webkit-text-stroke-width:0.35px;">67.2 KB</div>
<div class="r" style="left:1554px;top:605.6px;width:5px;height:17.0px;background:#b4b4b4;"></div>
<div class="r" style="left:0px;top:630.8px;width:1682px;height:33.200000000000045px;background:#f4f4f4;"></div>
<svg style="left:18px;top:638.80px" width="16" height="16" viewBox="0 0 16 16"><path d="M8 1.5 L14.5 8 L8 14.5 L1.5 8z" fill="none" stroke="#cfcfcf" stroke-width="1.5"/></svg>
<div class="t" style="top:636.95px;font-size:21.6px;line-height:21.6px;color:#000;font-weight:normal;font-family:'Liberation Mono', monospace;transform:scaleX(0.8975);transform-origin:left center;left:55.00px;-webkit-text-stroke-width:0.35px;">System.Reflection.<b>MethodBase[]</b></div>
<div class="t" style="top:636.95px;font-size:21.6px;line-height:21.6px;color:#000;font-weight:normal;font-family:'Liberation Mono', monospace;transform:scaleX(0.8975);transform-origin:right center;left:-223.00px;width:1500px;text-align:right;-webkit-text-stroke-width:0.35px;">821</div>
<div class="t" style="top:636.95px;font-size:21.6px;line-height:21.6px;color:#000;font-weight:normal;font-family:'Liberation Mono', monospace;transform:scaleX(0.8975);transform-origin:right center;left:43.50px;width:1500px;text-align:right;-webkit-text-stroke-width:0.35px;">64.9 KB</div>
<div class="r" style="left:1554px;top:638.8px;width:5px;height:17.0px;background:#b4b4b4;"></div>
<svg style="left:18px;top:672.00px" width="16" height="16" viewBox="0 0 16 16"><path d="M8 1.5 L14.5 8 L8 14.5 L1.5 8z" fill="none" stroke="#cfcfcf" stroke-width="1.5"/></svg>
<div class="t" style="top:670.15px;font-size:21.6px;line-height:21.6px;color:#000;font-weight:normal;font-family:'Liberation Mono', monospace;transform:scaleX(0.8975);transform-origin:left center;left:55.00px;-webkit-text-stroke-width:0.35px;">System.<b>Boolean</b></div>
<div class="t" style="top:670.15px;font-size:21.6px;line-height:21.6px;color:#000;font-weight:normal;font-family:'Liberation Mono', monospace;transform:scaleX(0.8975);transform-origin:right center;left:-223.00px;width:1500px;text-align:right;-webkit-text-stroke-width:0.35px;">2.746</div>
<div class="t" style="top:670.15px;font-size:21.6px;line-height:21.6px;color:#000;font-weight:normal;font-family:'Liberation Mono', monospace;transform:scaleX(0.8975);transform-origin:right center;left:43.50px;width:1500px;text-align:right;-webkit-text-stroke-width:0.35px;">64.4 KB</div>
<div class="r" style="left:1554px;top:672.0px;width:5px;height:17.0px;background:#b4b4b4;"></div>
<div class="r" style="left:0px;top:697.2px;width:1682px;height:33.19999999999993px;background:#f4f4f4;"></div>
<svg style="left:18px;top:705.20px" width="16" height="16" viewBox="0 0 16 16"><path d="M8 1.5 L14.5 8 L8 14.5 L1.5 8z" fill="none" stroke="#cfcfcf" stroke-width="1.5"/></svg>
<div class="t" style="top:703.35px;font-size:21.6px;line-height:21.6px;color:#000;font-weight:normal;font-family:'Liberation Mono', monospace;transform:scaleX(0.8975);transform-origin:left center;left:55.00px;-webkit-text-stroke-width:0.35px;">System.Reflection.<b>MonoProperty</b></div>
<div class="t" style="top:703.35px;font-size:21.6px;line-height:21.6px;color:#000;font-weight:normal;font-family:'Liberation Mono', monospace;transform:scaleX(0.8975);transform-origin:right center;left:-223.00px;width:1500px;text-align:right;-webkit-text-stroke-width:0.35px;">670</div>
<div class="t" style="top:703.35px;font-size:21.6px;line-height:21.6px;color:#000;font-weight:normal;font-family:'Liberation Mono', monospace;transform:scaleX(0.8975);transform-origin:right center;left:43.50px;width:1500px;text-align:right;-webkit-text-stroke-width:0.35px;">62.8 KB</div>
<div class="r" style="left:1554px;top:705.2px;width:5px;height:17.0px;background:#b4b4b4;"></div>
</div>
<div class="r" style="left:1682px;top:671px;width:421px;height:16px;background:#f9f9f9;"></div>
<div class="r" style="left:1682px;top:687px;width:421px;height:810px;background:#fff;"></div>
<div class="r" style="left:1682px;top:733px;width:2px;height:764px;background:#ebebeb;"></div>
<div class="r" style="left:1684px;top:733px;width:419px;height:764px;background:#dfe1e4;"></div>
<div class="r" style="left:1797px;top:690.6px;width:194px;height:40.39999999999998px;background:#ececec;border:1.5px solid #b5b5b5;border-top:none;border-bottom-width:2px;"></div>
<div class="r" style="left:1798.5px;top:690.6px;width:62.299999999999955px;height:38.39999999999998px;background:#fff;"></div>
<div class="r" style="left:1860.8px;top:690.6px;width:1.5px;height:40.39999999999998px;background:#b5b5b5;"></div>
<div class="r" style="left:1925px;top:690.6px;width:1.5px;height:40.39999999999998px;background:#b5b5b5;"></div>
<svg style="left:1818px;top:699px" width="24" height="24" viewBox="0 0 24 24"><circle cx="12" cy="12" r="10.8" fill="#555"/><rect x="10.6" y="9.5" width="2.8" height="8.5" fill="#fff"/><circle cx="12" cy="6.5" r="1.6" fill="#fff"/></svg>
<svg style="left:1882px;top:700px" width="24" height="22" viewBox="0 0 24 22"><path d="M1 4 Q1 13 10 13 L10 18 L20 10 L10 2 L10 7 Q5 7 1 4z" fill="#888"/></svg>
<svg style="left:1946px;top:699px" width="24" height="24" viewBox="0 0 24 24"><path d="M12 2 L21 7 L21 17 L12 22 L3 17 L3 7z M3 7 L12 12 L21 7 M12 12 L12 22" fill="none" stroke="#999" stroke-width="1.6" stroke-linejoin="round"/></svg>
<div class="t" style="top:759.87px;font-size:22px;line-height:22px;color:#000;font-weight:bold;font-family:'Liberation Sans', sans-serif;letter-spacing:0.321px;left:1708.00px;">Filter</div>
<div class="r" style="left:1703px;top:791px;width:400px;height:1.5px;background:#8d8d8d;"></div>
<div class="r" style="left:1704px;top:812.5px;width:26px;height:25.5px;background:#e9e9e9;border:1px solid #cfcfcf;border-radius:4px;"></div>
<svg style="left:1708px;top:817px" width="20" height="18" viewBox="0 0 20 18"><path d="M2.5 9 L7 14.5 L16 2.5" fill="none" stroke="#999" stroke-width="2.4"/></svg>
<div class="t" style="top:811.53px;font-size:22.4px;line-height:22.4px;color:#8a8a8a;font-weight:normal;font-family:'Liberation Sans', sans-serif;letter-spacing:0.133px;left:1739.00px;">Only Live Objects</div>
<div class="t" style="top:867.03px;font-size:22.4px;line-height:22.4px;color:#555;font-weight:normal;font-family:'Liberation Sans', sans-serif;letter-spacing:0.033px;left:1704.00px;">Group by:</div>
<div class="r" style="left:1821px;top:858.6px;width:159px;height:38.69999999999993px;background:#fff;border:1px solid #d2d2d2;border-radius:6px;box-shadow:0 1px 1px rgba(0,0,0,0.12);"></div>
<div class="t" style="top:867.03px;font-size:22.4px;line-height:22.4px;color:#222;font-weight:normal;font-family:'Liberation Sans', sans-serif;letter-spacing:-0.650px;left:1864.40px;">Class</div>
<svg style="left:1954px;top:865px" width="16" height="26" viewBox="0 0 16 26"><path d="M2 9 L8 3 L14 9 M2 17 L8 23 L14 17" fill="none" stroke="#333" stroke-width="2.2"/></svg>
<div class="t" style="top:921.37px;font-size:22px;line-height:22px;color:#000;font-weight:bold;font-family:'Liberation Sans', sans-serif;letter-spacing:0.497px;left:1707.70px;">Statistics</div>
<div class="r" style="left:1703px;top:952.5px;width:400px;height:1.5px;background:#8d8d8d;"></div>
<div class="t" style="top:972.13px;font-size:22.4px;line-height:22.4px;color:#2438f4;font-weight:normal;font-family:'Liberation Sans', sans-serif;letter-spacing:-0.392px;left:338.61px;width:1500px;text-align:right;">5 MB</div>
<div class="t" style="top:972.13px;font-size:22.4px;line-height:22.4px;color:#444;font-weight:normal;font-family:'Liberation Sans', sans-serif;letter-spacing:0.199px;left:1856.50px;">memory allocated</div>
<div class="t" style="top:1001.23px;font-size:22.4px;line-height:22.4px;color:#2438f4;font-weight:normal;font-family:'Liberation Sans', sans-serif;letter-spacing:0.703px;left:339.70px;width:1500px;text-align:right;">82.958</div>
<div class="t" style="top:1001.23px;font-size:22.4px;line-height:22.4px;color:#444;font-weight:normal;font-family:'Liberation Sans', sans-serif;left:1856.50px;">objects allocated</div>
<div class="t" style="top:1030.33px;font-size:22.4px;line-height:22.4px;color:#555;font-weight:normal;font-family:'Liberation Sans', sans-serif;left:339.00px;width:1500px;text-align:right;">-</div>
<div class="t" style="top:1030.33px;font-size:22.4px;line-height:22.4px;color:#444;font-weight:normal;font-family:'Liberation Sans', sans-serif;left:1856.50px;">live objects</div>
<div class="t" style="top:1059.43px;font-size:22.4px;line-height:22.4px;color:#2438f4;font-weight:normal;font-family:'Liberation Sans', sans-serif;letter-spacing:-0.363px;left:338.64px;width:1500px;text-align:right;">152.9 MB</div>
<div class="t" style="top:1059.43px;font-size:22.4px;line-height:22.4px;color:#444;font-weight:normal;font-family:'Liberation Sans', sans-serif;letter-spacing:0.313px;left:1856.50px;">private bytes</div>
<div class="t" style="top:1088.53px;font-size:22.4px;line-height:22.4px;color:#2438f4;font-weight:normal;font-family:'Liberation Sans', sans-serif;letter-spacing:-0.363px;left:338.64px;width:1500px;text-align:right;">152.9 MB</div>
<div class="t" style="top:1088.53px;font-size:22.4px;line-height:22.4px;color:#444;font-weight:normal;font-family:'Liberation Sans', sans-serif;left:1856.50px;">working set</div>
<div class="t" style="top:1117.63px;font-size:22.4px;line-height:22.4px;color:#2438f4;font-weight:normal;font-family:'Liberation Sans', sans-serif;left:339.00px;width:1500px;text-align:right;">4 GB</div>
<div class="t" style="top:1117.63px;font-size:22.4px;line-height:22.4px;color:#444;font-weight:normal;font-family:'Liberation Sans', sans-serif;left:1856.50px;">virtual bytes</div>
<div class="t" style="top:1166.87px;font-size:22px;line-height:22px;color:#000;font-weight:bold;font-family:'Liberation Sans', sans-serif;letter-spacing:0.234px;left:1707.70px;">Top allocations</div>
<div class="r" style="left:1703px;top:1198px;width:400px;height:1.5px;background:#8d8d8d;"></div>
<div class="t" style="top:1372.43px;font-size:22.4px;line-height:22.4px;color:#111;font-weight:normal;font-family:'Liberation Sans', sans-serif;letter-spacing:-0.050px;left:1698.40px;">ObjCMethod...(176.4 KB)</div>
<div class="t" style="top:1405.53px;font-size:22.4px;line-height:22.4px;color:#111;font-weight:normal;font-family:'Liberation Sans', sans-serif;letter-spacing:0.045px;left:1698.40px;">ExportAttr...(123.3 KB)</div>
<svg style="left:0;top:0;opacity:0.82" width="2103" height="1497"><path d="M1893.2 1358.5 L1890.55 1289.45 A69.1 69.1 0 0 1 1962.30 1358.50z" fill="#8d333a"/><path d="M1893.2 1358.5 L1962.30 1358.50 A69.1 69.1 0 0 1 1845.72 1408.71z" fill="#8c306e"/><path d="M1893.2 1358.5 L1845.72 1408.71 A69.1 69.1 0 0 1 1838.16 1400.28z" fill="#7b3191"/><path d="M1893.2 1358.5 L1838.16 1400.28 A69.1 69.1 0 0 1 1831.41 1389.44z" fill="#3f3195"/><path d="M1893.2 1358.5 L1831.41 1389.44 A69.1 69.1 0 0 1 1826.15 1375.22z" fill="#2f5896"/><path d="M1893.2 1358.5 L1826.15 1375.22 A69.1 69.1 0 0 1 1824.14 1360.91z" fill="#2f8797"/><path d="M1893.2 1358.5 L1824.14 1360.91 A69.1 69.1 0 0 1 1825.87 1342.96z" fill="#2f8f5a"/><path d="M1893.2 1358.5 L1825.87 1342.96 A69.1 69.1 0 0 1 1833.66 1323.43z" fill="#429332"/><path d="M1893.2 1358.5 L1833.66 1323.43 A69.1 69.1 0 0 1 1862.91 1296.39z" fill="#889537"/><path d="M1893.2 1358.5 L1862.91 1296.39 A69.1 69.1 0 0 1 1890.55 1289.45z" fill="#966c2e"/><line x1="1893.2" y1="1358.5" x2="1890.55" y2="1289.45" stroke="#222" stroke-width="0.9"/><line x1="1893.2" y1="1358.5" x2="1962.30" y2="1358.50" stroke="#222" stroke-width="0.9"/><line x1="1893.2" y1="1358.5" x2="1845.72" y2="1408.71" stroke="#222" stroke-width="0.9"/><line x1="1893.2" y1="1358.5" x2="1838.16" y2="1400.28" stroke="#222" stroke-width="0.9"/><line x1="1893.2" y1="1358.5" x2="1831.41" y2="1389.44" stroke="#222" stroke-width="0.9"/><line x1="1893.2" y1="1358.5" x2="1826.15" y2="1375.22" stroke="#222" stroke-width="0.9"/><line x1="1893.2" y1="1358.5" x2="1824.14" y2="1360.91" stroke="#222" stroke-width="0.9"/><line x1="1893.2" y1="1358.5" x2="1825.87" y2="1342.96" stroke="#222" stroke-width="0.9"/><line x1="1893.2" y1="1358.5" x2="1833.66" y2="1323.43" stroke="#222" stroke-width="0.9"/><line x1="1893.2" y1="1358.5" x2="1862.91" y2="1296.39" stroke="#222" stroke-width="0.9"/><circle cx="1893.2" cy="1358.5" r="69.1" fill="none" stroke="#222" stroke-width="1"/></svg>
<div class="t" style="top:1232.03px;font-size:22.4px;line-height:22.4px;color:#111;font-weight:normal;font-family:'Liberation Sans', sans-serif;letter-spacing:0.138px;left:1698.40px;">Object[] (412.7 KB)</div>
<div class="t" style="top:1258.93px;font-size:22.4px;line-height:22.4px;color:#111;font-weight:normal;font-family:'Liberation Sans', sans-serif;letter-spacing:0.205px;left:1698.40px;">Int32[] (381.9 KB)</div>
<div class="t" style="top:1293.03px;font-size:22.4px;line-height:22.4px;color:#111;font-weight:normal;font-family:'Liberation Sans', sans-serif;letter-spacing:-0.188px;left:1698.40px;">RuntimePro...(241.9 KB)</div>
<div class="t" style="top:1322.63px;font-size:22.4px;line-height:22.4px;color:#111;font-weight:normal;font-family:'Liberation Sans', sans-serif;letter-spacing:0.178px;left:1698.40px;">PropertyIn...(234.2 KB)</div>
<div class="t" style="top:1227.13px;font-size:22.4px;line-height:22.4px;color:#111;font-weight:normal;font-family:'Liberation Sans', sans-serif;letter-spacing:-0.162px;left:1905.50px;">Others (1.9 MB)</div>
<div class="t" style="top:1255.83px;font-size:22.4px;line-height:22.4px;color:#111;font-weight:normal;font-family:'Liberation Sans', sans-serif;letter-spacing:-0.112px;left:1913.60px;">String (1.3 MB)</div>
<svg style="left:0px;top:115px" width="140" height="140" viewBox="0 0 140 140"><circle cx="68.4" cy="68.4" r="51.3" fill="none" stroke="#2c4a86" stroke-width="4"/><path d="M37 98.8 A43.7 43.7 0 1 1 99.8 98.8" fill="none" stroke="#2c4a86" stroke-width="4"/><circle cx="68.4" cy="67.9" r="29" fill="#2c4a86"/><path d="M96.7 68.6 L112.1 68.6 A43.7 43.7 0 0 1 99.8 98.8 C97 102.5 92 101.8 88 100.6 C80 98.3 75 97.8 68 97.8 C61 97.8 55 98.3 47.5 100.6 C43 101.8 39.5 101.5 37 98.8 L46.5 88.3 L68.4 67.9 Z" fill="#2c4a86"/><line x1="47.4" y1="31.5" x2="55" y2="42" stroke="#2c4a86" stroke-width="2.8"/><line x1="26.9" y1="78.6" x2="41" y2="74.8" stroke="#2c4a86" stroke-width="2.4"/><circle cx="50.6" cy="107.3" r="1.8" fill="#2c4a86"/><circle cx="85.7" cy="107.3" r="1.8" fill="#2c4a86"/><line x1="56.5" y1="105.2" x2="56.5" y2="109.4" stroke="#2c4a86" stroke-width="3.2" stroke-linecap="round"/><line x1="62.4" y1="103.6" x2="62.4" y2="111.0" stroke="#2c4a86" stroke-width="3.2" stroke-linecap="round"/><line x1="68" y1="102.5" x2="68" y2="112.1" stroke="#2c4a86" stroke-width="3.2" stroke-linecap="round"/><line x1="74" y1="103.6" x2="74" y2="111.0" stroke="#2c4a86" stroke-width="3.2" stroke-linecap="round"/><line x1="80" y1="105.2" x2="80" y2="109.4" stroke="#2c4a86" stroke-width="3.2" stroke-linecap="round"/></svg>
<svg style="left:0px;top:270px" width="140" height="140" viewBox="0 0 140 140"><circle cx="24.6" cy="72.7" r="6.4" fill="none" stroke="#808080" stroke-width="3.6"/><circle cx="87.1" cy="30.1" r="6.4" fill="none" stroke="#808080" stroke-width="3.6"/><circle cx="93.3" cy="106.3" r="6.4" fill="none" stroke="#808080" stroke-width="3.6"/><path d="M24.8 64.6 A44 44 0 0 1 69.7 26.0" fill="none" stroke="#808080" stroke-width="3.6"/><line x1="69.7" y1="26.0" x2="60.7" y2="16.6" stroke="#808080" stroke-width="3.6"/><line x1="69.7" y1="26.0" x2="60.2" y2="35.0" stroke="#808080" stroke-width="3.6"/><path d="M94.1 34.2 A44 44 0 0 1 106.2 92.7" fill="none" stroke="#808080" stroke-width="3.6"/><line x1="106.2" y1="92.7" x2="118.8" y2="89.5" stroke="#808080" stroke-width="3.6"/><line x1="106.2" y1="92.7" x2="103.1" y2="80.0" stroke="#808080" stroke-width="3.6"/><path d="M86.4 110.2 A44 44 0 0 1 29.3 90.0" fill="none" stroke="#808080" stroke-width="3.6"/><line x1="29.3" y1="90.0" x2="25.3" y2="102.3" stroke="#808080" stroke-width="3.6"/><line x1="29.3" y1="90.0" x2="41.7" y2="94.0" stroke="#808080" stroke-width="3.6"/></svg>
<svg style="left:0px;top:425px" width="140" height="140" viewBox="0 0 140 140"><circle cx="68.4" cy="74.2" r="50.2" fill="none" stroke="#808080" stroke-width="4"/><circle cx="68.4" cy="74.2" r="44.7" fill="#808080"/><rect x="63.1" y="17.5" width="11.1" height="6" fill="#808080"/><line x1="61.4" y1="13.9" x2="75.2" y2="13.9" stroke="#808080" stroke-width="3.6" stroke-linecap="round"/><rect x="-4" y="-3" width="8" height="6" fill="#808080" transform="translate(105.5 36.5) rotate(45)"/><circle cx="68.4" cy="34.2" r="1.9" fill="#fff"/><circle cx="73.3" cy="34.5" r="1.9" fill="#fff"/><circle cx="78.2" cy="35.4" r="1.9" fill="#fff"/><circle cx="82.9" cy="36.9" r="1.9" fill="#fff"/><circle cx="87.4" cy="39.0" r="1.9" fill="#fff"/><circle cx="91.6" cy="41.6" r="1.9" fill="#fff"/><circle cx="95.5" cy="44.8" r="1.9" fill="#fff"/><circle cx="98.9" cy="48.3" r="1.9" fill="#fff"/><circle cx="101.9" cy="52.3" r="1.9" fill="#fff"/><circle cx="104.3" cy="56.6" r="1.9" fill="#fff"/><circle cx="106.2" cy="61.2" r="1.9" fill="#fff"/><circle cx="107.5" cy="66.0" r="1.9" fill="#fff"/><circle cx="108.3" cy="70.9" r="1.9" fill="#fff"/><circle cx="108.4" cy="75.8" r="1.9" fill="#fff"/><circle cx="107.9" cy="80.7" r="1.9" fill="#fff"/><circle cx="106.8" cy="85.6" r="1.9" fill="#fff"/><circle cx="105.1" cy="90.2" r="1.9" fill="#fff"/><circle cx="102.8" cy="94.6" r="1.9" fill="#fff"/><circle cx="100.0" cy="98.7" r="1.9" fill="#fff"/><circle cx="96.7" cy="102.4" r="1.9" fill="#fff"/><circle cx="93.0" cy="105.7" r="1.9" fill="#fff"/><circle cx="88.9" cy="108.5" r="1.9" fill="#fff"/><circle cx="84.5" cy="110.8" r="1.9" fill="#fff"/><circle cx="79.9" cy="112.5" r="1.9" fill="#fff"/><circle cx="75.1" cy="113.6" r="1.9" fill="#fff"/><circle cx="70.1" cy="114.2" r="1.9" fill="#fff"/><circle cx="65.2" cy="114.1" r="1.9" fill="#fff"/><circle cx="60.3" cy="113.4" r="1.9" fill="#fff"/><circle cx="55.5" cy="112.1" r="1.9" fill="#fff"/><circle cx="50.9" cy="110.2" r="1.9" fill="#fff"/><circle cx="46.6" cy="107.7" r="1.9" fill="#fff"/><circle cx="42.6" cy="104.8" r="1.9" fill="#fff"/><circle cx="39.1" cy="101.4" r="1.9" fill="#fff"/><circle cx="35.9" cy="97.5" r="1.9" fill="#fff"/><circle cx="33.3" cy="93.3" r="1.9" fill="#fff"/><circle cx="31.2" cy="88.9" r="1.9" fill="#fff"/><g><polygon points="39.30,63.50 40.90,61.90 47.10,61.90 48.70,63.50 47.10,65.10 40.90,65.10" fill="none" stroke="#fff" stroke-width="1.1"/><polygon points="49.50,64.30 51.10,65.90 51.10,71.60 49.50,73.20 47.90,71.60 47.90,65.90" fill="none" stroke="#fff" stroke-width="1.1"/><polygon points="49.50,74.80 51.10,76.40 51.10,82.10 49.50,83.70 47.90,82.10 47.90,76.40" fill="none" stroke="#fff" stroke-width="1.1"/><polygon points="39.30,84.50 40.90,82.90 47.10,82.90 48.70,84.50 47.10,86.10 40.90,86.10" fill="none" stroke="#fff" stroke-width="1.1"/><polygon points="38.50,74.80 40.10,76.40 40.10,82.10 38.50,83.70 36.90,82.10 36.90,76.40" fill="none" stroke="#fff" stroke-width="1.1"/><polygon points="38.50,64.30 40.10,65.90 40.10,71.60 38.50,73.20 36.90,71.60 36.90,65.90" fill="none" stroke="#fff" stroke-width="1.1"/><polygon points="54.30,63.50 55.90,61.90 62.10,61.90 63.70,63.50 62.10,65.10 55.90,65.10" fill="none" stroke="#fff" stroke-width="1.1"/><polygon points="64.50,64.30 66.10,65.90 66.10,71.60 64.50,73.20 62.90,71.60 62.90,65.90" fill="none" stroke="#fff" stroke-width="1.1"/><polygon points="64.50,74.80 66.10,76.40 66.10,82.10 64.50,83.70 62.90,82.10 62.90,76.40" fill="none" stroke="#fff" stroke-width="1.1"/><polygon points="54.30,84.50 55.90,82.90 62.10,82.90 63.70,84.50 62.10,86.10 55.90,86.10" fill="none" stroke="#fff" stroke-width="1.1"/><polygon points="53.50,74.80 55.10,76.40 55.10,82.10 53.50,83.70 51.90,82.10 51.90,76.40" fill="none" stroke="#fff" stroke-width="1.1"/><polygon points="53.50,64.30 55.10,65.90 55.10,71.60 53.50,73.20 51.90,71.60 51.90,65.90" fill="none" stroke="#fff" stroke-width="1.1"/><polygon points="84.00,64.30 85.60,65.90 85.60,71.60 84.00,73.20 82.40,71.60 82.40,65.90" fill="none" stroke="#fff" stroke-width="1.1"/><polygon points="84.00,74.80 85.60,76.40 85.60,82.10 84.00,83.70 82.40,82.10 82.40,76.40" fill="none" stroke="#fff" stroke-width="1.1"/><polygon points="73.00,64.30 74.60,65.90 74.60,71.60 73.00,73.20 71.40,71.60 71.40,65.90" fill="none" stroke="#fff" stroke-width="1.1"/><polygon points="73.80,74.00 75.40,72.40 81.60,72.40 83.20,74.00 81.60,75.60 75.40,75.60" fill="none" stroke="#fff" stroke-width="1.1"/><polygon points="88.30,63.50 89.90,61.90 96.10,61.90 97.70,63.50 96.10,65.10 89.90,65.10" fill="none" stroke="#fff" stroke-width="1.1"/><polygon points="98.50,64.30 100.10,65.90 100.10,71.60 98.50,73.20 96.90,71.60 96.90,65.90" fill="none" stroke="#fff" stroke-width="1.1"/><polygon points="88.30,74.00 89.90,72.40 96.10,72.40 97.70,74.00 96.10,75.60 89.90,75.60" fill="none" stroke="#fff" stroke-width="1.1"/><polygon points="87.50,74.80 89.10,76.40 89.10,82.10 87.50,83.70 85.90,82.10 85.90,76.40" fill="none" stroke="#fff" stroke-width="1.1"/><polygon points="88.30,84.50 89.90,82.90 96.10,82.90 97.70,84.50 96.10,86.10 89.90,86.10" fill="none" stroke="#fff" stroke-width="1.1"/><rect x="67" y="68" width="2.4" height="2.4" fill="#fff"/><rect x="67" y="78.5" width="2.4" height="2.4" fill="#fff"/></g></svg>
<svg style="left:554px;top:78px" width="22" height="22" viewBox="0 0 22 22"><path d="M3 20 L1.5 3" stroke="#666" stroke-width="2.2"/><path d="M2 3 Q6 0 10 3 Q14 6 19 4 L16 11 Q12 13 8 10 Q5 8 2.8 10z" fill="#666"/></svg>
<svg style="left:572.5px;top:91px;filter:drop-shadow(0 1px 1.5px rgba(0,0,0,0.35))" width="26" height="36" viewBox="0 0 24 34"><path d="M2 1.5 L2 25.5 L7.6 20 L11.6 29.5 L16 27.6 L12 18.6 L19.6 18.6 Z" fill="#000" stroke="#fff" stroke-width="1.6" stroke-linejoin="round"/></svg>
</div>
<div class="r" style="left:2058px;top:97px;width:760px;height:1344.5px;border-radius:8px 8px 0 0;overflow:hidden;background:#fff;box-shadow:0 24px 70px rgba(0,0,0,0.5),0 0 2px rgba(0,0,0,0.4);">
</div>
<div class="r" style="left:2058px;top:97px;width:742px;height:43px;background:linear-gradient(#ebebeb,#d3d3d3);border-bottom:1px solid #b8b8b8;border-radius:8px 8px 0 0;"></div>
<div class="r" style="left:2073.2px;top:107.2px;width:23.600000000000364px;height:23.60000000000001px;background:#d5d5d5;border:1px solid #c4c4c4;border-radius:50%;"></div>
<div class="r" style="left:2112.7px;top:107.2px;width:23.600000000000364px;height:23.60000000000001px;background:#fcbc2f;border:1px solid #e0a020;border-radius:50%;"></div>
<div class="r" style="left:2151.7999999999997px;top:107.2px;width:23.600000000000364px;height:23.60000000000001px;background:#d5d5d5;border:1px solid #c4c4c4;border-radius:50%;"></div>
<div class="t" style="top:107.14px;font-size:25.7px;line-height:25.7px;color:#4a4a4a;font-weight:normal;font-family:'Liberation Sans', sans-serif;letter-spacing:-0.124px;left:2253.40px;">iPhone 7 – iOS 10.3 (14E269)</div>
<div class="r" style="left:2058px;top:140px;width:742px;height:125px;background:#f8f8f8;"></div>
<div class="r" style="left:2058px;top:264.5px;width:742px;height:1.3000000000000114px;background:#c8c8c8;"></div>
<div class="t" style="top:148.73px;font-size:23.7px;line-height:23.7px;color:#000;font-weight:normal;font-family:'Liberation Sans', sans-serif;letter-spacing:0.268px;left:2071.00px;">Carrier</div>
<svg style="left:2148px;top:140px" width="40" height="40" viewBox="2148 140 40 40"><path d="M2157.4 156.4 A16.5 16.5 0 0 1 2178.6 156.4 M2161.4 160.8 A10.5 10.5 0 0 1 2174.6 160.8" fill="none" stroke="#000" stroke-width="2.9" stroke-linecap="round"/><path d="M2168.1 169 L2164.2 164.4 A6 6 0 0 1 2172 164.4 Z" fill="#000"/></svg>
<div class="t" style="top:148.73px;font-size:23.7px;line-height:23.7px;color:#000;font-weight:bold;font-family:'Liberation Sans', sans-serif;letter-spacing:0.940px;left:2379.40px;-webkit-text-stroke-width:0;">8:06 AM</div>
<div class="r" style="left:2731.5px;top:151.1px;width:43.59999999999991px;height:18.5px;border:1.4px solid #333;border-radius:3.5px;"></div>
<div class="r" style="left:2733.8px;top:153.1px;width:15.0px;height:14.599999999999994px;background:#000;border-radius:2px 0 0 2px;"></div>
<div class="r" style="left:2775.7px;top:157px;width:3.400000000000091px;height:6.599999999999994px;background:#000;border-radius:0 3px 3px 0;"></div>
<div class="t" style="top:206.38px;font-size:32.5px;line-height:32.5px;color:#147efb;font-weight:normal;font-family:'Liberation Sans', sans-serif;letter-spacing:-0.636px;left:2091.70px;">Edit</div>
<div class="t" style="top:205.96px;font-size:33px;line-height:33px;color:#000;font-weight:bold;font-family:'Liberation Sans', sans-serif;letter-spacing:0.023px;left:2371.00px;-webkit-text-stroke-width:0;">Master</div>
<div class="r" style="left:2725px;top:218.8px;width:34px;height:2.6999999999999886px;background:#147efb;"></div>
<div class="r" style="left:2740.6px;top:203px;width:2.800000000000182px;height:34px;background:#147efb;"></div>
<div class="r" style="left:2058px;top:265.8px;width:742px;height:1175.7px;background:#fff;"></div>
<div class="r" style="left:2058px;top:265.8px;width:760px;height:1175.7px;overflow:hidden;">
<div class="t" style="top:24.10px;font-size:38.5px;line-height:38.5px;color:#000;font-weight:bold;font-family:'Liberation Sans', sans-serif;transform:scaleX(1.087);transform-origin:left center;left:32.80px;-webkit-text-stroke-width:0.1px;">5/16/2017 8:06:23 AM</div>
<div class="r" style="left:31.699999999999818px;top:84.3px;width:728.3000000000002px;height:1.2999999999999972px;background:#d0d0d0;"></div>
<div class="t" style="top:109.96px;font-size:38.5px;line-height:38.5px;color:#000;font-weight:bold;font-family:'Liberation Sans', sans-serif;transform:scaleX(1.087);transform-origin:left center;left:32.80px;-webkit-text-stroke-width:0.1px;">5/16/2017 8:06:23 AM</div>
<div class="r" style="left:31.699999999999818px;top:170.16px;width:728.3000000000002px;height:1.3000000000000114px;background:#d0d0d0;"></div>
<div class="t" style="top:195.82px;font-size:38.5px;line-height:38.5px;color:#000;font-weight:bold;font-family:'Liberation Sans', sans-serif;transform:scaleX(1.087);transform-origin:left center;left:32.80px;-webkit-text-stroke-width:0.1px;">5/16/2017 8:06:23 AM</div>
<div class="r" style="left:31.699999999999818px;top:256.02px;width:728.3000000000002px;height:1.3000000000000114px;background:#d0d0d0;"></div>
<div class="t" style="top:281.68px;font-size:38.5px;line-height:38.5px;color:#000;font-weight:bold;font-family:'Liberation Sans', sans-serif;transform:scaleX(1.087);transform-origin:left center;left:32.80px;-webkit-text-stroke-width:0.1px;">5/16/2017 8:06:23 AM</div>
<div class="r" style="left:31.699999999999818px;top:341.88px;width:728.3000000000002px;height:1.3000000000000114px;background:#d0d0d0;"></div>
<div class="t" style="top:367.54px;font-size:38.5px;line-height:38.5px;color:#000;font-weight:bold;font-family:'Liberation Sans', sans-serif;transform:scaleX(1.087);transform-origin:left center;left:32.80px;-webkit-text-stroke-width:0.1px;">5/16/2017 8:06:23 AM</div>
<div class="r" style="left:31.699999999999818px;top:427.74px;width:728.3000000000002px;height:1.3000000000000114px;background:#d0d0d0;"></div>
<div class="t" style="top:453.40px;font-size:38.5px;line-height:38.5px;color:#000;font-weight:bold;font-family:'Liberation Sans', sans-serif;transform:scaleX(1.087);transform-origin:left center;left:32.80px;-webkit-text-stroke-width:0.1px;">5/16/2017 8:06:23 AM</div>
<div class="r" style="left:31.699999999999818px;top:513.6px;width:728.3000000000002px;height:1.2999999999999545px;background:#d0d0d0;"></div>
<div class="t" style="top:539.26px;font-size:38.5px;line-height:38.5px;color:#000;font-weight:bold;font-family:'Liberation Sans', sans-serif;transform:scaleX(1.087);transform-origin:left center;left:32.80px;-webkit-text-stroke-width:0.1px;">5/16/2017 8:06:22 AM</div>
<div class="r" style="left:31.699999999999818px;top:599.46px;width:728.3000000000002px;height:1.2999999999999545px;background:#d0d0d0;"></div>
<div class="t" style="top:625.12px;font-size:38.5px;line-height:38.5px;color:#000;font-weight:bold;font-family:'Liberation Sans', sans-serif;transform:scaleX(1.087);transform-origin:left center;left:32.80px;-webkit-text-stroke-width:0.1px;">5/16/2017 8:06:22 AM</div>
<div class="r" style="left:31.699999999999818px;top:685.32px;width:728.3000000000002px;height:1.2999999999999545px;background:#d0d0d0;"></div>
<div class="t" style="top:710.98px;font-size:38.5px;line-height:38.5px;color:#000;font-weight:bold;font-family:'Liberation Sans', sans-serif;transform:scaleX(1.087);transform-origin:left center;left:32.80px;-webkit-text-stroke-width:0.1px;">5/16/2017 8:06:22 AM</div>
<div class="r" style="left:31.699999999999818px;top:771.18px;width:728.3000000000002px;height:1.3000000000000682px;background:#d0d0d0;"></div>
<div class="t" style="top:796.84px;font-size:38.5px;line-height:38.5px;color:#000;font-weight:bold;font-family:'Liberation Sans', sans-serif;transform:scaleX(1.087);transform-origin:left center;left:32.80px;-webkit-text-stroke-width:0.1px;">5/16/2017 8:06:22 AM</div>
<div class="r" style="left:31.699999999999818px;top:857.04px;width:728.3000000000002px;height:1.3000000000000682px;background:#d0d0d0;"></div>
<div class="t" style="top:882.70px;font-size:38.5px;line-height:38.5px;color:#000;font-weight:bold;font-family:'Liberation Sans', sans-serif;transform:scaleX(1.087);transform-origin:left center;left:32.80px;-webkit-text-stroke-width:0.1px;">5/16/2017 8:06:22 AM</div>
<div class="r" style="left:31.699999999999818px;top:942.9px;width:728.3000000000002px;height:1.3000000000000682px;background:#d0d0d0;"></div>
<div class="t" style="top:968.56px;font-size:38.5px;line-height:38.5px;color:#000;font-weight:bold;font-family:'Liberation Sans', sans-serif;transform:scaleX(1.087);transform-origin:left center;left:32.80px;-webkit-text-stroke-width:0.1px;">5/16/2017 8:06:22 AM</div>
<div class="r" style="left:31.699999999999818px;top:1028.76px;width:728.3000000000002px;height:1.2999999999999545px;background:#d0d0d0;"></div>
<div class="t" style="top:1054.42px;font-size:38.5px;line-height:38.5px;color:#000;font-weight:bold;font-family:'Liberation Sans', sans-serif;transform:scaleX(1.0734515819750718);transform-origin:left center;left:32.80px;-webkit-text-stroke-width:0.1px;">5/16/2017 8:06:21 AM</div>
<div class="r" style="left:31.699999999999818px;top:1114.62px;width:728.3000000000002px;height:1.300000000000182px;background:#d0d0d0;"></div>
<div class="t" style="top:1140.28px;font-size:38.5px;line-height:38.5px;color:#000;font-weight:bold;font-family:'Liberation Sans', sans-serif;transform:scaleX(1.0734515819750718);transform-origin:left center;left:32.80px;-webkit-text-stroke-width:0.1px;">5/16/2017 8:06:21 AM</div>
<div class="r" style="left:31.699999999999818px;top:1200.48px;width:728.3000000000002px;height:1.2999999999999545px;background:#d0d0d0;"></div>
</div>
</body></html>
